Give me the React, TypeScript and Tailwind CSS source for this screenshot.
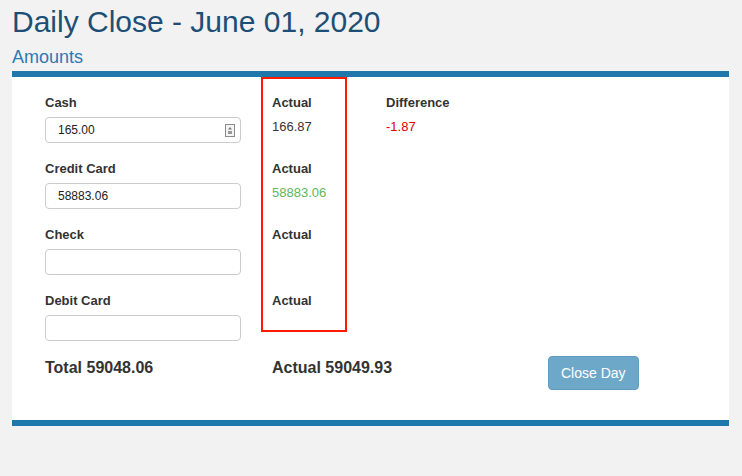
import React from "react";

const rows = [
  { label: "Cash", value: "165.00", actual: "166.87", actualColor: "text-[#3a3232]", diff: "-1.87", spinner: true },
  { label: "Credit Card", value: "58883.06", actual: "58883.06", actualColor: "text-[#5cb85c]" },
  { label: "Check", value: "" },
  { label: "Debit Card", value: "" },
];

function Spinner() {
  return (
    <svg width="10" height="13" viewBox="0 0 10 13" className="absolute right-[5px] top-[6px]">
      <rect x="0.5" y="0.5" width="9" height="12" fill="#f4f4f4" stroke="#8a8a8a" />
      <path d="M5 3 L3 5.5 H7 Z" fill="#777" />
      <rect x="3" y="7" width="4" height="3" fill="#999" />
    </svg>
  );
}

export default function App() {
  return (
    <div className="min-h-[476px] bg-[#f2f2f2] px-3 font-['Liberation_Sans',Arial,sans-serif] text-[#333]">
      <h1 className="pt-[4px] text-[30px] leading-[36px] text-[#1d4f76]">Daily Close - June 01, 2020</h1>
      <h2 className="mt-[6px] text-[18px] leading-[22px] text-[#2a7ab5]">Amounts</h2>
      <div className="mt-[3px] mr-[1px] border-y-[6px] border-[#1f78ab] bg-white">
        <div className="relative pl-[33px] pt-[17px] pb-[30px]">
          <div className="pointer-events-none absolute left-[249px] top-0 h-[255px] w-[86px] border-[2.5px] border-[#ff1a00]" />
          {rows.map((row) => (
            <div key={row.label} className="grid grid-cols-[227px_114px_1fr] pb-[17px]">
              <div>
                <div className="text-[13px] font-bold leading-[18px]">{row.label}</div>
                <div className="relative mt-[5px] h-[26px] w-[196px] rounded-[4px] border border-[#ccc] bg-white pl-[12px] text-[12px] leading-[24px] text-[#222]">
                  {row.value}
                  {row.spinner && <Spinner />}
                </div>
              </div>
              <div>
                <div className="text-[13px] font-bold leading-[18px]">Actual</div>
                {row.actual && (
                  <div className={`mt-[6px] text-[13px] leading-[18px] ${row.actualColor}`}>{row.actual}</div>
                )}
              </div>
              <div>
                {row.diff && (
                  <>
                    <div className="text-[13px] font-bold leading-[18px]">Difference</div>
                    <div className="mt-[6px] text-[13px] leading-[18px] text-[#e00000]">{row.diff}</div>
                  </>
                )}
              </div>
            </div>
          ))}
          <div className="grid grid-cols-[227px_114px_1fr]">
            <div className="text-[16px] font-bold leading-[20px]">Total 59048.06</div>
            <div className="whitespace-nowrap text-[16px] font-bold leading-[20px]">Actual 59049.93</div>
            <div className="-mt-[2px] pl-[162px]">
              <button className="h-[34px] rounded-[4px] border border-[#5f9cc0] bg-[#6ea8c9] px-[12px] text-[14px] text-white">
                Close Day
              </button>
            </div>
          </div>
        </div>
      </div>
    </div>
  );
}
